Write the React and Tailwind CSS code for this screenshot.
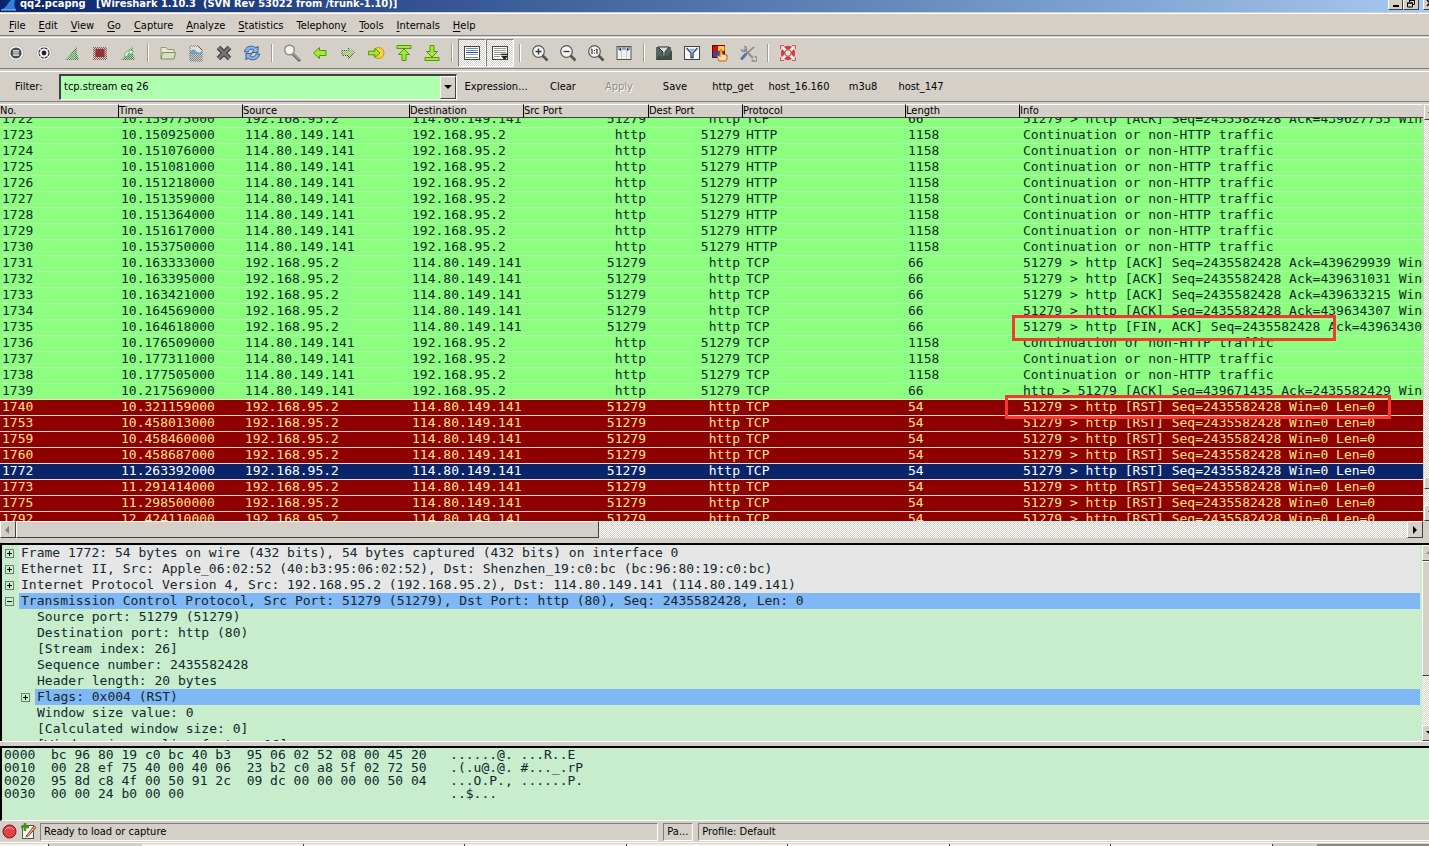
import { useLayoutEffect, useRef } from 'react';
import clsx from 'clsx';

const HOST = '192.168.95.2';
const SERVER = '114.80.149.141';

// from the capturing host to the server
const ack = (no, time, info, mark) => ({ no, time, src: HOST, dst: SERVER, sport: '51279', dport: 'http', proto: 'TCP', len: 66, info, mark, kind: 'http' });
// payload from the server
const data = (no, time, proto) => ({ no, time, src: SERVER, dst: HOST, sport: 'http', dport: '51279', proto, len: 1158, info: 'Continuation or non-HTTP traffic', kind: 'http' });
const rst = (no, time, extra) => ({ no, time, src: HOST, dst: SERVER, sport: '51279', dport: 'http', proto: 'TCP', len: 54, info: '51279 > http [RST] Seq=2435582428 Win=0 Len=0', kind: 'rst', ...extra });

const packets = [
  ack(1722, '10.159775000', '51279 > http [ACK] Seq=2435582428 Ack=439627755 Win=65535 Len=0'),
  data(1723, '10.150925000', 'HTTP'),
  data(1724, '10.151076000', 'HTTP'),
  data(1725, '10.151081000', 'HTTP'),
  data(1726, '10.151218000', 'HTTP'),
  data(1727, '10.151359000', 'HTTP'),
  data(1728, '10.151364000', 'HTTP'),
  data(1729, '10.151617000', 'HTTP'),
  data(1730, '10.153750000', 'HTTP'),
  ack(1731, '10.163333000', '51279 > http [ACK] Seq=2435582428 Ack=439629939 Win=65535 Len=0'),
  ack(1732, '10.163395000', '51279 > http [ACK] Seq=2435582428 Ack=439631031 Win=65535 Len=0'),
  ack(1733, '10.163421000', '51279 > http [ACK] Seq=2435582428 Ack=439633215 Win=65535 Len=0'),
  ack(1734, '10.164569000', '51279 > http [ACK] Seq=2435582428 Ack=439634307 Win=65535 Len=0'),
  ack(1735, '10.164618000', '51279 > http [FIN, ACK] Seq=2435582428 Ack=439634307 Win=65535 Len=0', 'fin'),
  data(1736, '10.176509000', 'TCP'),
  data(1737, '10.177311000', 'TCP'),
  data(1738, '10.177505000', 'TCP'),
  { no: 1739, time: '10.217569000', src: SERVER, dst: HOST, sport: 'http', dport: '51279', proto: 'TCP', len: 66, info: 'http > 51279 [ACK] Seq=439671435 Ack=2435582429 Win=6432 Len=0', kind: 'http' },
  rst(1740, '10.321159000', { mark: 'rst' }),
  rst(1753, '10.458013000'),
  rst(1759, '10.458460000'),
  rst(1760, '10.458687000'),
  rst(1772, '11.263392000', { kind: 'selected' }),
  rst(1773, '11.291414000'),
  rst(1775, '11.298500000'),
  rst(1792, '12.424110000'),
];

const rowStyle = {
  http: 'bg-[#8dff80] text-[#12272e] border-[#b4f7ae]',
  rst: 'bg-[#8f0000] text-[#ffe08c] border-[#f0dcd0]',
  selected: 'bg-[#0a246a] text-white border-[#e8dcd8]',
};

const markStyle = {
  fin: '-left-[7px] -top-[5px] w-[324px] h-[26px]',
  rst: '-left-[14px] -top-[5px] w-[386px] h-[24px]',
};

const columns = ['No.', 'Time', 'Source', 'Destination', 'Src Port', 'Dest Port', 'Protocol', 'Length', 'Info'];

const tree = [
  { text: 'Frame 1772: 54 bytes on wire (432 bits), 54 bytes captured (432 bits) on interface 0', sign: '+', kind: 'head' },
  { text: 'Ethernet II, Src: Apple_06:02:52 (40:b3:95:06:02:52), Dst: Shenzhen_19:c0:bc (bc:96:80:19:c0:bc)', sign: '+', kind: 'head' },
  { text: 'Internet Protocol Version 4, Src: 192.168.95.2 (192.168.95.2), Dst: 114.80.149.141 (114.80.149.141)', sign: '+', kind: 'head' },
  { text: 'Transmission Control Protocol, Src Port: 51279 (51279), Dst Port: http (80), Seq: 2435582428, Len: 0', sign: '-', kind: 'blue' },
  { text: 'Source port: 51279 (51279)', child: true },
  { text: 'Destination port: http (80)', child: true },
  { text: '[Stream index: 26]', child: true },
  { text: 'Sequence number: 2435582428', child: true },
  { text: 'Header length: 20 bytes', child: true },
  { text: 'Flags: 0x004 (RST)', sign: '+', kind: 'blue', child: true },
  { text: 'Window size value: 0', child: true },
  { text: '[Calculated window size: 0]', child: true },
  { text: '[Window size scaling factor: 16]', child: true },
];

const treeStyle = {
  head: 'bg-[#e6e6e6] border-[#dfe9e1]',
  blue: 'bg-[#80b7f5] border-[#80b7f5]',
  plain: 'border-transparent',
};

const hex = `0000  bc 96 80 19 c0 bc 40 b3  95 06 02 52 08 00 45 20   ......@. ...R..E 
0010  00 28 ef 75 40 00 40 06  23 b2 c0 a8 5f 02 72 50   .(.u@.@. #..._.rP
0020  95 8d c8 4f 00 50 91 2c  09 dc 00 00 00 00 50 04   ...O.P., ......P.
0030  00 00 24 b0 00 00                                  ..$...`;

const menus = [
  ['', 'F', 'ile'],
  ['', 'E', 'dit'],
  ['', 'V', 'iew'],
  ['', 'G', 'o'],
  ['', 'C', 'apture'],
  ['', 'A', 'nalyze'],
  ['', 'S', 'tatistics'],
  ['Telephon', 'y', ''],
  ['', 'T', 'ools'],
  ['', 'I', 'nternals'],
  ['', 'H', 'elp'],
];

function Svg({ children, size = 18 }) {
  return (
    <svg width={size} height={size} viewBox="0 0 18 18" fill="none" aria-hidden="true">
      {children}
    </svg>
  );
}

// greyed-out look of GTK's insensitive icons: a checkerboard over the drawing
function Dither({ id }) {
  return (
    <>
      <defs>
        <pattern id={id} width="2" height="2" patternUnits="userSpaceOnUse">
          <rect width="1" height="1" fill="#d4d0c8" />
          <rect x="1" y="1" width="1" height="1" fill="#d4d0c8" />
        </pattern>
      </defs>
      <rect width="18" height="18" fill={`url(#${id})`} />
    </>
  );
}

function Lens({ children }) {
  return (
    <Svg>
      <path d="M11.5 11.5l5 5" stroke="#555" strokeWidth="2.6" />
      <circle cx="7.5" cy="7.5" r="5.8" fill="#f4f4f2" stroke="#555" strokeWidth="1.2" />
      {children}
    </Svg>
  );
}

const icons = {
  interfaces: (
    <Svg>
      <circle cx="9" cy="9" r="7.5" fill="#f7f7f5" stroke="#bbb" />
      <circle cx="9" cy="9" r="5.6" fill="#4a4d52" />
      <path d="M6 6.8h6M6 9h6M6 11.2h6" stroke="#fff" strokeWidth="1.2" />
    </Svg>
  ),
  options: (
    <Svg>
      <circle cx="9" cy="9" r="7.5" fill="#f7f7f5" stroke="#bbb" />
      <circle cx="9" cy="9" r="5" stroke="#444" strokeWidth="1.4" strokeDasharray="3.1 .8" />
      <circle cx="9" cy="9" r="2.4" fill="#222" />
    </Svg>
  ),
  start: (
    <Svg>
      <path d="M2 16C5 14 8 9 14 2c-1 5 0 10 2 14z" fill="#3a7d48" />
      <path d="M5 15C8 12 10 9 12.500 6v9z" fill="#3fae50" />
      <Dither id="dither-start" />
    </Svg>
  ),
  stop: (
    <Svg>
      <rect x="2" y="3" width="14" height="13" fill="#8a5a58" />
      <Dither id="dither-stop" />
      <rect x="4.500" y="5" width="9" height="8" fill="#983034" />
    </Svg>
  ),
  restart: (
    <Svg>
      <path d="M2 16C5 14 8 9 14 2c-1 5 0 10 2 14z" fill="#3a7d48" />
      <Dither id="dither-restart" />
      <path d="M6.500 13a3.500 3.500 0 0 1 4-5.500L10 5.500l4.500 1.700-2.700 3.600-.8-1.600a1.800 1.800 0 0 0-2 2.600z" fill="#dff0d8" stroke="#5aa860" strokeWidth=".8" />
    </Svg>
  ),
  open: (
    <Svg>
      <path d="M2 15V3.500h5l1.500 2H15V8" fill="#e6ead6" stroke="#8d9c74" />
      <path d="M2 15l1.500-6.500h13L15 15z" fill="#d5dfbd" stroke="#7d9060" />
    </Svg>
  ),
  save: (
    <Svg>
      <path d="M3 2h8l4 4v11H3z" fill="#f2f4f6" stroke="#555" />
      <path d="M3 9h12v8H3z" fill="#7a8288" />
      <Dither id="dither-save" />
      <path d="M3 8c2-3 4-3 6-1s4 2 6 0v3H3z" fill="#6ea4cc" />
    </Svg>
  ),
  close: (
    <Svg>
      <path d="M3.500 3.500l11 11M14.500 3.500l-11 11" stroke="#3d3d3d" strokeWidth="5" />
      <path d="M3.500 3.500l11 11M14.500 3.500l-11 11" stroke="#777" strokeWidth="2.6" />
    </Svg>
  ),
  reload: (
    <Svg>
      <path d="M1.500 8c0-5 7.500-8 11.500-4l2-2v6.500H9l2-2.300C8.500 4 5.500 5.500 5 8z" fill="#8db6e6" stroke="#2f5f9e" />
      <path d="M16.500 10c0 5-7.500 8-11.500 4l-2 2V9.500h6l-2 2.300c2.500 2.200 5.500.7 6-1.800z" fill="#8db6e6" stroke="#2f5f9e" />
    </Svg>
  ),
  find: (
    <Svg>
      <path d="M10 10l7 7" stroke="#666" strokeWidth="3" />
      <path d="M10.500 10l6 6" stroke="#ccc" />
      <circle cx="6.500" cy="6" r="4.800" fill="#f3f3ef" stroke="#8a8a86" strokeWidth="1.400" />
    </Svg>
  ),
  back: (
    <Svg>
      <path d="M2.500 9l6-5.500v3H15v5H8.500v3z" fill="#a5e836" stroke="#4e9a06" />
    </Svg>
  ),
  forward: (
    <Svg>
      <path d="M15.500 9l-6-5.500v3H3v5h6.500v3z" fill="#8ec85a" stroke="#35601a" />
      <Dither id="dither-forward" />
    </Svg>
  ),
  jump: (
    <Svg>
      <circle cx="11.500" cy="9" r="5.500" fill="#fbd23c" stroke="#c9930a" />
      <path d="M13 9L8 4.500v2.700H1.500v3.600H8v2.700z" fill="#a5e836" stroke="#4e9a06" />
    </Svg>
  ),
  top: (
    <Svg>
      <path d="M2 1.500h14v3H2z" fill="#a5e836" stroke="#4e9a06" />
      <path d="M9 5l5.500 5.500H11v6H7v-6H3.500z" fill="#a5e836" stroke="#4e9a06" />
    </Svg>
  ),
  bottom: (
    <Svg>
      <path d="M2 13.500h14v3H2z" fill="#a5e836" stroke="#4e9a06" />
      <path d="M9 13l5.500-5.500H11v-6H7v6H3.500z" fill="#a5e836" stroke="#4e9a06" />
    </Svg>
  ),
  colorize: (
    <Svg>
      <rect x="1.500" y="2.500" width="15" height="13" fill="#fff" stroke="#444" />
      <path d="M3 4.500h12M3 13.500h12" stroke="#888" />
      <path d="M3 6.500h12" stroke="#5a8fd0" />
      <path d="M3 8.500h12" stroke="#2a4fb8" />
      <path d="M3 10.500h12" stroke="#8fb08a" />
    </Svg>
  ),
  autoscroll: (
    <Svg>
      <rect x="1.500" y="2.500" width="15" height="13" fill="#fff" stroke="#444" />
      <path d="M3 4.500h12M3 6.500h12M3 8.500h12M3 10.500h8M3 12.500h6" stroke="#999" />
      <path d="M10 12h7l-3.500 4z" fill="#222" />
      <path d="M10 10.500h7" stroke="#222" strokeWidth="1.500" />
    </Svg>
  ),
  zoomIn: (
    <Lens>
      <path d="M4.500 7.500h6M7.500 4.500v6" stroke="#333" strokeWidth="1.300" />
    </Lens>
  ),
  zoomOut: (
    <Lens>
      <path d="M4.500 7.500h6" stroke="#333" strokeWidth="1.300" />
    </Lens>
  ),
  zoomOne: (
    <Lens>
      <path d="M5 5v5M10 5v5M4.200 5.700L5 5M9.200 5.700L10 5" stroke="#333" strokeWidth="1.200" />
      <path d="M7 6h1v1H7zM7 8.500h1v1H7z" fill="#333" />
    </Lens>
  ),
  resize: (
    <Svg>
      <rect x="2" y="2.500" width="14" height="13" fill="#eceeec" stroke="#555" />
      <path d="M2.500 3h13v3h-13z" fill="#8fa3b8" />
      <path d="M6.500 3v12M11.500 3v12" stroke="#d0d0cc" />
      <path d="M4 5.500l2-1.500v3zM14 5.500L12 4v3z" fill="#223" />
    </Svg>
  ),
  captureFilter: (
    <Svg>
      <path d="M1 3h15v13H1z" fill="#5c645f" />
      <path d="M3 3h11l-4 5v5H8V8z" fill="#cfe0e4" stroke="#25302c" />
      <path d="M1 16l3-5 3 3 3-3 2 2 5-7v10z" fill="#38503c" />
    </Svg>
  ),
  displayFilter: (
    <Svg>
      <rect x="1.500" y="2.500" width="15" height="13" fill="#f4f6f8" stroke="#444" />
      <path d="M3.500 4l4.500 5v4.500h2V9l4.500-5" fill="#dbe6f0" stroke="#33475c" strokeWidth="1.300" />
      <path d="M6.500 5h5L9 8z" fill="#7fa3cc" />
    </Svg>
  ),
  rules: (
    <Svg>
      <rect x="1.500" y="1.500" width="12" height="12" fill="#cc1010" stroke="#700" />
      <rect x="7" y="2" width="6.500" height="5" fill="#fbd23c" />
      <rect x="2" y="8" width="6" height="5" fill="#2050b0" />
      <path d="M8 17l-2-5 2-.5 1 1V6h2v4l5 1v4l-1.500 2z" fill="#ffd9a8" stroke="#b5651d" />
    </Svg>
  ),
  preferences: (
    <Svg>
      <path d="M15 3L6 11" stroke="#888" strokeWidth="1.600" />
      <path d="M6.500 10.500L3 14.500" stroke="#4a7ab4" strokeWidth="3" strokeLinecap="round" />
      <path d="M5 5l9 9" stroke="#8a9098" strokeWidth="2.200" />
      <path d="M2.500 5a2.500 2.500 0 1 0 2.500-2.500M15.500 12.500a2.500 2.500 0 1 1-2.500 3" stroke="#8a9098" strokeWidth="1.500" />
    </Svg>
  ),
  help: (
    <Svg>
      <path d="M1.500 5V1.500H5M13 1.500h3.500V5M16.500 13v3.500H13M5 16.500H1.500V13" stroke="#c86060" />
      <circle cx="9" cy="9" r="5.200" stroke="#d43c3c" strokeWidth="4" />
      <path d="M3.500 3.500l3.300 3.300M14.500 3.500l-3.300 3.300M3.500 14.500l3.300-3.300M14.500 14.500l-3.300-3.300" stroke="#f6efec" strokeWidth="2.800" />
      <circle cx="9" cy="9" r="3.200" fill="#e4dfd9" stroke="#a83434" strokeWidth=".8" />
    </Svg>
  ),
};

const toolbar = [
  [['interfaces', 'List interfaces'], ['options', 'Capture options'], ['start', 'Start capture'], ['stop', 'Stop capture'], ['restart', 'Restart capture']],
  [['open', 'Open file'], ['save', 'Save file'], ['close', 'Close file'], ['reload', 'Reload file']],
  [['find', 'Find packet'], ['back', 'Go back'], ['forward', 'Go forward'], ['jump', 'Go to packet'], ['top', 'First packet'], ['bottom', 'Last packet']],
  [['colorize', 'Colorize packet list'], ['autoscroll', 'Auto scroll']],
  [['zoomIn', 'Zoom in'], ['zoomOut', 'Zoom out'], ['zoomOne', 'Normal size'], ['resize', 'Resize columns']],
  [['captureFilter', 'Capture filters'], ['displayFilter', 'Display filters'], ['rules', 'Coloring rules'], ['preferences', 'Preferences']],
  [['help', 'Help']],
];
const toggled = ['colorize', 'autoscroll'];

const raised = 'border border-t-white border-l-white border-r-[#404040] border-b-[#404040] bg-[#d4d0c8]';
const sunken = 'border border-t-[#808080] border-l-[#808080] border-r-white border-b-white';
const trough = 'bg-[repeating-conic-gradient(#ffffff_0_25%,#d4d0c8_0_50%)] bg-[length:2px_2px]';
const mono = "font-['DejaVu_Sans_Mono',monospace] text-[13px] leading-4 whitespace-pre";

function Arrow({ dir, dim }) {
  const d = { up: 'M0 5l4-4 4 4z', down: 'M0 2l4 4 4-4z', left: 'M5 0L1 4l4 4z', right: 'M2 0l4 4-4 4z' }[dir];
  return (
    <svg width="8" height="8" viewBox="0 0 8 8" className="shrink-0" aria-hidden="true">
      <path d={d} fill={dim ? '#808080' : '#000'} />
    </svg>
  );
}

function ScrollButton({ dir, dim, label, className }) {
  return (
    <button aria-label={label} className={clsx(raised, 'flex shrink-0 items-center justify-center', className)}>
      <Arrow dir={dir} dim={dim} />
    </button>
  );
}

function TitleBar() {
  return (
    <header className="flex h-3 shrink-0 items-center overflow-hidden bg-linear-to-r from-[#0a246a] to-[#a6caf0]">
      <svg width="18" height="12" viewBox="0 0 18 12" className="shrink-0" aria-hidden="true">
        <path d="M1 10C6 8 8 3 11 0h4c-1 4-1 7 1 10z" fill="#2f7fe0" />
        <path d="M1 10h15" stroke="#9cc8ff" />
      </svg>
      <h1 className="-mt-1 ml-0.5 grow whitespace-pre leading-3 font-bold text-white">
        {'qq2.pcapng   [Wireshark 1.10.3  (SVN Rev 53022 from /trunk-1.10)]'}
      </h1>
      <div className="flex h-3 w-[41px] shrink-0 items-start">
        <button aria-label="Minimize" className={clsx(raised, 'flex h-[10px] w-[15px] shrink-0 items-end border-t-0 pb-0.5 pl-1')}>
          <span className="h-0.5 w-[6px] bg-black" />
        </button>
        <button aria-label="Restore" className={clsx(raised, 'h-[10px] w-4 shrink-0 border-t-0')}>
          <svg width="13" height="9" viewBox="0 0 13 9" fill="none" aria-hidden="true">
            <path d="M5.500 2V.5h5v4H9M5 .5h6" stroke="#000" />
            <path d="M3.500 3h5v4h-5zM3 3h6" stroke="#000" />
          </svg>
        </button>
        <button aria-label="Close" className={clsx(raised, 'ml-1 h-[10px] w-4 shrink-0 border-t-0')}>
          <svg width="12" height="9" viewBox="0 0 12 9" aria-hidden="true">
            <path d="M3 0l6 6M9 0L3 6" stroke="#000" strokeWidth="1.500" />
          </svg>
        </button>
      </div>
    </header>
  );
}

function MenuBar() {
  return (
    <nav className="mt-px flex h-[23px] shrink-0 items-center gap-px border-t border-b border-t-white border-b-[#808080] px-[3px] pt-0.5">
      {menus.map(([pre, key, post]) => (
        <button key={pre + key + post} className="px-1.5">
          {pre}
          <u className="underline-offset-2">{key}</u>
          {post}
        </button>
      ))}
    </nav>
  );
}

function Toolbar() {
  return (
    <div role="toolbar" className="mt-px flex h-8 shrink-0 items-center border-t border-b border-t-white border-b-[#808080] pl-0.5">
      {toolbar.map((group, i) => (
        <div key={i} className="flex items-center">
          {i > 0 && (
            <div className="flex w-3 justify-center">
              <span className="h-[18px] w-0.5 border-l border-[#a09c94] bg-white" />
            </div>
          )}
          {group.map(([name, label]) => (
            <button
              key={name}
              aria-label={label}
              className={clsx('flex h-7 w-7 items-center justify-center', toggled.includes(name) && sunken, toggled.includes(name) && trough)}
            >
              {icons[name]}
            </button>
          ))}
        </div>
      ))}
    </div>
  );
}

function FilterBar() {
  return (
    <div className="mt-0.5 flex h-[31px] shrink-0 items-center border-t border-b border-t-white border-b-[#808080]">
      <label htmlFor="filter" className="w-[59px] pl-[15px]">Filter:</label>
      <div className="flex h-[26px] w-[398px] border border-t-2 border-l-2 border-t-[#404040] border-l-[#404040] border-r-white border-b-white">
        <input id="filter" type="text" defaultValue="tcp.stream eq 26" className="min-w-0 grow bg-[#afffaf] px-[3px] outline-none" />
        <ScrollButton dir="down" label="Recent filters" className="w-4" />
      </div>
      <button className="w-[78px]">Expression...</button>
      <button className="w-14">Clear</button>
      <button disabled className="w-14 text-[#8f8b84] [text-shadow:1px_1px_0_#fff]">Apply</button>
      <button className="w-14">Save</button>
      <button className="w-[60px]">http_get</button>
      <button className="w-[72px]">host_16.160</button>
      <button className="w-14">m3u8</button>
      <button className="w-[60px]">host_147</button>
    </div>
  );
}

function PacketList() {
  const list = useRef(null);

  useLayoutEffect(() => {
    list.current.scrollTop = 7;
  }, []);

  return (
    <section className="mt-0.5 flex min-h-0 flex-[434_1_0px]">
      <div className="flex min-w-0 grow flex-col">
        <div ref={list} className="min-h-0 grow overflow-hidden bg-white">
          <table className="w-full table-fixed border-separate border-spacing-0">
            <colgroup>
              <col className="w-[118px]" />
              <col className="w-[124px]" />
              <col className="w-[167px]" />
              <col className="w-[114px]" />
              <col className="w-[125px]" />
              <col className="w-[94px]" />
              <col className="w-[163px]" />
              <col className="w-[114px]" />
              <col />
            </colgroup>
            <thead>
              <tr>
                {columns.map((name, i) => (
                  <th
                    key={name}
                    className={clsx(
                      'sticky top-0 z-20 h-[14px] border-t border-b border-t-white border-b-[#404040] bg-[#d4d0c8] p-0 text-left leading-3 font-normal',
                      i > 0 && 'border-l border-l-black'
                    )}
                  >
                    {name}
                  </th>
                ))}
              </tr>
            </thead>
            <tbody className={mono}>
              {packets.map((p) => (
                <tr key={p.no} className={clsx('[&>td]:h-4 [&>td]:border-t [&>td]:border-inherit [&>td]:p-0 [&>td]:align-top [&>td]:leading-[14px]', rowStyle[p.kind])}>
                  <td><div className="pl-0.5">{p.no}</div></td>
                  <td><div className="pl-[3px]">{p.time}</div></td>
                  <td><div className="pl-[3px]">{p.src}</div></td>
                  <td><div className="pl-[3px]">{p.dst}</div></td>
                  <td><div className="pr-0.5 text-right">{p.sport}</div></td>
                  <td><div className="pr-0.5 text-right">{p.dport}</div></td>
                  <td><div className="pl-1">{p.proto}</div></td>
                  <td><div className="pl-[3px]">{p.len}</div></td>
                  <td className="relative">
                    <div className="overflow-hidden pl-1">{p.info}</div>
                    {p.mark && <span className={clsx('absolute z-10 border-3 border-[#f23a2e]', markStyle[p.mark])} />}
                  </td>
                </tr>
              ))}
            </tbody>
          </table>
        </div>
        <div className={clsx('flex h-[17px] shrink-0', trough)}>
          <ScrollButton dir="left" dim label="Scroll left" className="w-4" />
          <div className={clsx(raised, 'w-[41%]')} />
          <div className="grow" />
          <ScrollButton dir="right" label="Scroll right" className="w-4" />
        </div>
      </div>
      <div className={clsx('mb-[17px] ml-px flex w-[5px] shrink-0 flex-col overflow-hidden', trough)}>
        <ScrollButton dir="up" label="Scroll up" className="h-4 w-4" />
        <div className="grow" />
        <div className={clsx(raised, 'h-3 w-4')} />
        <div className="h-4" />
        <ScrollButton dir="down" label="Scroll down" className="h-4 w-4" />
      </div>
    </section>
  );
}

function Expander({ sign }) {
  return (
    <span className="flex w-[19px] shrink-0 items-center pl-[5px]">
      {sign && (
        <button aria-label={sign === '+' ? 'Expand' : 'Collapse'} className="h-[9px] w-[9px] border border-[#6f7f70]">
          <svg width="7" height="7" viewBox="0 0 7 7" className="block" aria-hidden="true">
            <path d={sign === '+' ? 'M1 3.500h5M3.500 1v5' : 'M1 3.500h5'} stroke="#000" />
          </svg>
        </button>
      )}
    </span>
  );
}

function PacketDetails() {
  return (
    <section className="flex min-h-0 flex-[196_1_0px] border-t-2 border-b border-t-black border-b-white">
      <div className={clsx('min-w-0 grow overflow-hidden border-l-2 border-black bg-[#c7edcc]', mono)}>
        {tree.map((row) => (
          <div key={row.text} className={clsx('-ml-0.5 flex h-4', row.child && 'pl-4')}>
            <Expander sign={row.sign} />
            <div className={clsx('mr-0.5 grow overflow-hidden border-t pl-0.5 leading-[14px] text-[#12272e]', treeStyle[row.kind || 'plain'])}>{row.text}</div>
          </div>
        ))}
      </div>
      <div className={clsx('flex w-[7px] shrink-0 flex-col overflow-hidden', trough)}>
        <ScrollButton dir="up" dim label="Scroll up" className="h-4 w-4" />
        <div className={clsx(raised, 'h-[115px] w-4')} />
        <div className="grow" />
        <ScrollButton dir="down" label="Scroll down" className="h-4 w-4" />
      </div>
    </section>
  );
}

function StatusBar() {
  return (
    <footer className="flex h-[21px] shrink-0 items-center">
      <button aria-label="Expert info" className="ml-0.5">
        <svg width="15" height="15" viewBox="0 0 15 15" aria-hidden="true">
          <circle cx="7.500" cy="7.500" r="6.500" fill="#e04343" stroke="#7c1414" />
          <path d="M3 6a5 4 0 0 1 9 0" stroke="#f59a9a" fill="none" />
        </svg>
      </button>
      <button aria-label="Edit capture comment" className="ml-[3px] w-5">
        <svg width="18" height="17" viewBox="0 0 18 17" aria-hidden="true">
          <rect x="2.500" y="2.500" width="11" height="13" fill="#fdfdf8" stroke="#555" />
          <path d="M5 0v8M1 4h8" stroke="#3f9a1c" strokeWidth="2.600" />
          <path d="M6.500 12.500L14 3l2 1.500-7.500 8.500-2.500.8z" fill="#e0a080" stroke="#8a4a30" />
        </svg>
      </button>
      <p className={clsx(sunken, 'h-[18px] grow-[617] basis-0 pl-[3px] leading-4')}>Ready to load or capture</p>
      <p className={clsx(sunken, 'ml-[5px] h-[18px] w-[30px] pl-[3px] leading-4')}>Pa...</p>
      <p className={clsx(sunken, 'ml-[5px] h-[18px] grow-[731] basis-0 border-r-0 pl-[3px] leading-4')}>Profile: Default</p>
    </footer>
  );
}

export default function App() {
  return (
    <div className="flex h-screen flex-col overflow-hidden bg-[#d4d0c8] font-['DejaVu_Sans_Condensed',sans-serif] text-[11px] leading-4 text-black">
      <TitleBar />
      <MenuBar />
      <Toolbar />
      <FilterBar />
      <PacketList />
      <div className="h-[5px] shrink-0 cursor-row-resize" />
      <PacketDetails />
      <div className="h-1 shrink-0 cursor-row-resize" />
      <pre className={clsx(mono, 'min-h-0 flex-[72_1_0px] overflow-hidden border-t-2 border-b border-l-2 border-t-black border-b-white border-l-black bg-[#c7edcc] pl-0.5 leading-[13px] text-[#12272e]')}>{hex}</pre>
      <StatusBar />
      <div className="flex h-1 shrink-0 border-t border-white pt-px">
        <span className="w-12 bg-[#f6f3ee]" />
        <span className="w-[94px] border-l border-[#404040]" />
        {[0, 1, 2, 3, 4, 5, 6].map((n) => (
          <span key={n} className="grow border-r border-[#404040] bg-[#f6f3ee]" />
        ))}
        <span className="w-11" />
        <span className="w-28 bg-[#8c8880]" />
      </div>
    </div>
  );
}
